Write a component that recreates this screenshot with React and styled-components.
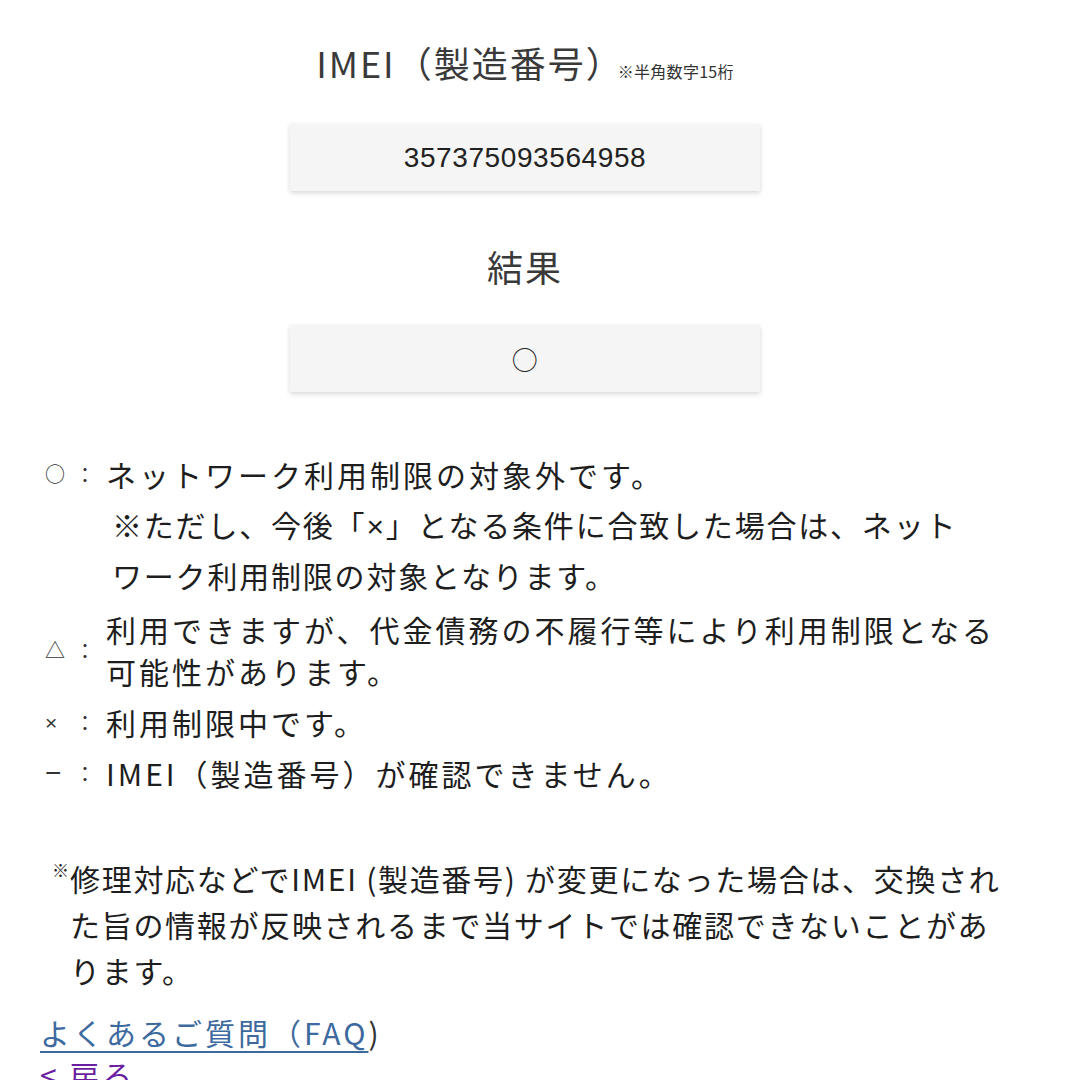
import React from 'react'
import styled, { createGlobalStyle } from 'styled-components'

const GlobalStyle = createGlobalStyle`
    body {
        margin: 0;
        background: #fff;
        font-family: 'Noto Sans CJK JP', 'Noto Sans', sans-serif;
        color: #1e1e1e;
    }
`
const Page = styled.main`
    width: 1080px;
    box-sizing: border-box;
    padding: 37px 70px 0 40px;
    overflow: hidden;
    height: 1080px;
    line-break: strict;
`
const Center = styled.section`
    display: flex;
    flex-direction: column;
    align-items: center;
`
const TitleRow = styled.div`
    display: flex;
    align-items: baseline;
    margin-top: ${(props) => props.mt || '0'};
`
const Title = styled.h2`
    margin: 0;
    font-size: 36px;
    line-height: 50px;
    font-weight: 400;
    color: #3a3a3a;
    letter-spacing: 2px;
`
const Hint = styled.span`
    font-size: 16px;
    color: #333;
    margin-left: -6px;
    letter-spacing: 0.3px;
`
const ValueBox = styled.div`
    width: 470px;
    height: 67px;
    margin-top: ${(props) => props.mt || '0'};
    background: #f5f5f5;
    box-shadow: 0 2px 5px rgba(0, 0, 0, 0.16);
    display: flex;
    align-items: center;
    justify-content: center;
    font-family: ${(props) => (props.digits ? "'Liberation Sans', Arial, sans-serif" : 'inherit')};
    font-size: ${(props) => props.fs || '28px'};
    color: #222;
    letter-spacing: 0.6px;
`
const Legend = styled.ul`
    list-style: none;
    margin: 61px 0 0 5px;
    padding: 0;
    display: flex;
    flex-direction: column;
    gap: 9px;
    font-size: 30px;
    letter-spacing: 3px;
`
const Item = styled.li`
    display: flex;
    flex-direction: column;
`
const Row = styled.div`
    display: flex;
    align-items: center;
`
const Mark = styled.span`
    display: flex;
    align-items: center;
    width: 61px;
    flex: none;
    letter-spacing: 0;
    color: #333;
`
const Symbol = styled.span`
    width: 30px;
    font-family: ${(props) => (props.latin ? "'Liberation Sans', sans-serif" : 'inherit')};
    font-size: ${(props) => props.size || '20px'};
    line-height: 1;
`
const Colon = styled.span`
    font-size: 20px;
`
const Text = styled.span`
    line-height: 42px;
`
const Sub = styled.p`
    margin: 5px 0 0 67px;
    line-height: 48px;
    letter-spacing: 1.8px;
`
const Latin = styled.span`
    font-family: 'Liberation Sans', sans-serif;
`
const Note = styled.div`
    display: flex;
    margin: 61px 0 0 12px;
    font-size: 30px;
    letter-spacing: 1.7px;
`
const NoteMark = styled.span`
    flex: none;
    width: 18px;
    font-size: 17px;
    line-height: 30px;
    letter-spacing: 0;
`
const NoteText = styled.p`
    margin: 0;
    line-height: 46px;
`
const Links = styled.nav`
    display: flex;
    flex-direction: column;
    margin-top: 18px;
    font-size: 30px;
    line-height: 42px;
    letter-spacing: 3px;
`
const Link = styled.a`
    color: ${(props) => (props.visited ? '#6a1fa0' : '#3d6a9e')};
    text-decoration: ${(props) => (props.visited ? 'none' : 'underline')};
    text-underline-offset: 6px;
    text-decoration-thickness: 1.5px;
`
const Tail = styled.span`
    color: #333;
`

const items = [
    {
        sym: '○',
        size: '20px',
        text: 'ネットワーク利用制限の対象外です。',
        sub: (
            <>
                ※ただし、今後「<Latin>×</Latin>」となる条件に合致した場合は、ネットワーク利用制限の対象となります。
            </>
        ),
    },
    { sym: '△', size: '20px', text: '利用できますが、代金債務の不履行等により利用制限となる可能性があります。' },
    { sym: '×', size: '21px', latin: true, text: '利用制限中です。' },
    { sym: '−', size: '28px', latin: true, text: 'IMEI（製造番号）が確認できません。' },
]

export default function App() {
    return (
        <Page lang="ja">
            <GlobalStyle />
            <Center>
                <TitleRow>
                    <Title>IMEI（製造番号）</Title>
                    <Hint>※半角数字15桁</Hint>
                </TitleRow>
                <ValueBox mt="37px" digits>
                    357375093564958
                </ValueBox>
                <TitleRow mt="50px">
                    <Title>結果</Title>
                </TitleRow>
                <ValueBox mt="34px" fs="26px">
                    ○
                </ValueBox>
            </Center>
            <Legend>
                {items.map((item) => (
                    <Item key={item.sym}>
                        <Row>
                            <Mark>
                                <Symbol size={item.size} latin={item.latin}>
                                    {item.sym}
                                </Symbol>
                                <Colon>：</Colon>
                            </Mark>
                            <Text>{item.text}</Text>
                        </Row>
                        {item.sub && <Sub>{item.sub}</Sub>}
                    </Item>
                ))}
            </Legend>
            <Note>
                <NoteMark>※</NoteMark>
                <NoteText>
                    修理対応などでIMEI (製造番号) が変更になった場合は、交換された旨の情報が反映されるまで当サイトでは確認できないことがあります。
                </NoteText>
            </Note>
            <Links>
                <span>
                    <Link href="#">よくあるご質問（FAQ</Link>
                    <Tail>)</Tail>
                </span>
                <span>
                    <Link href="#" visited>
                        &lt; 戻る
                    </Link>
                </span>
            </Links>
        </Page>
    )
}
